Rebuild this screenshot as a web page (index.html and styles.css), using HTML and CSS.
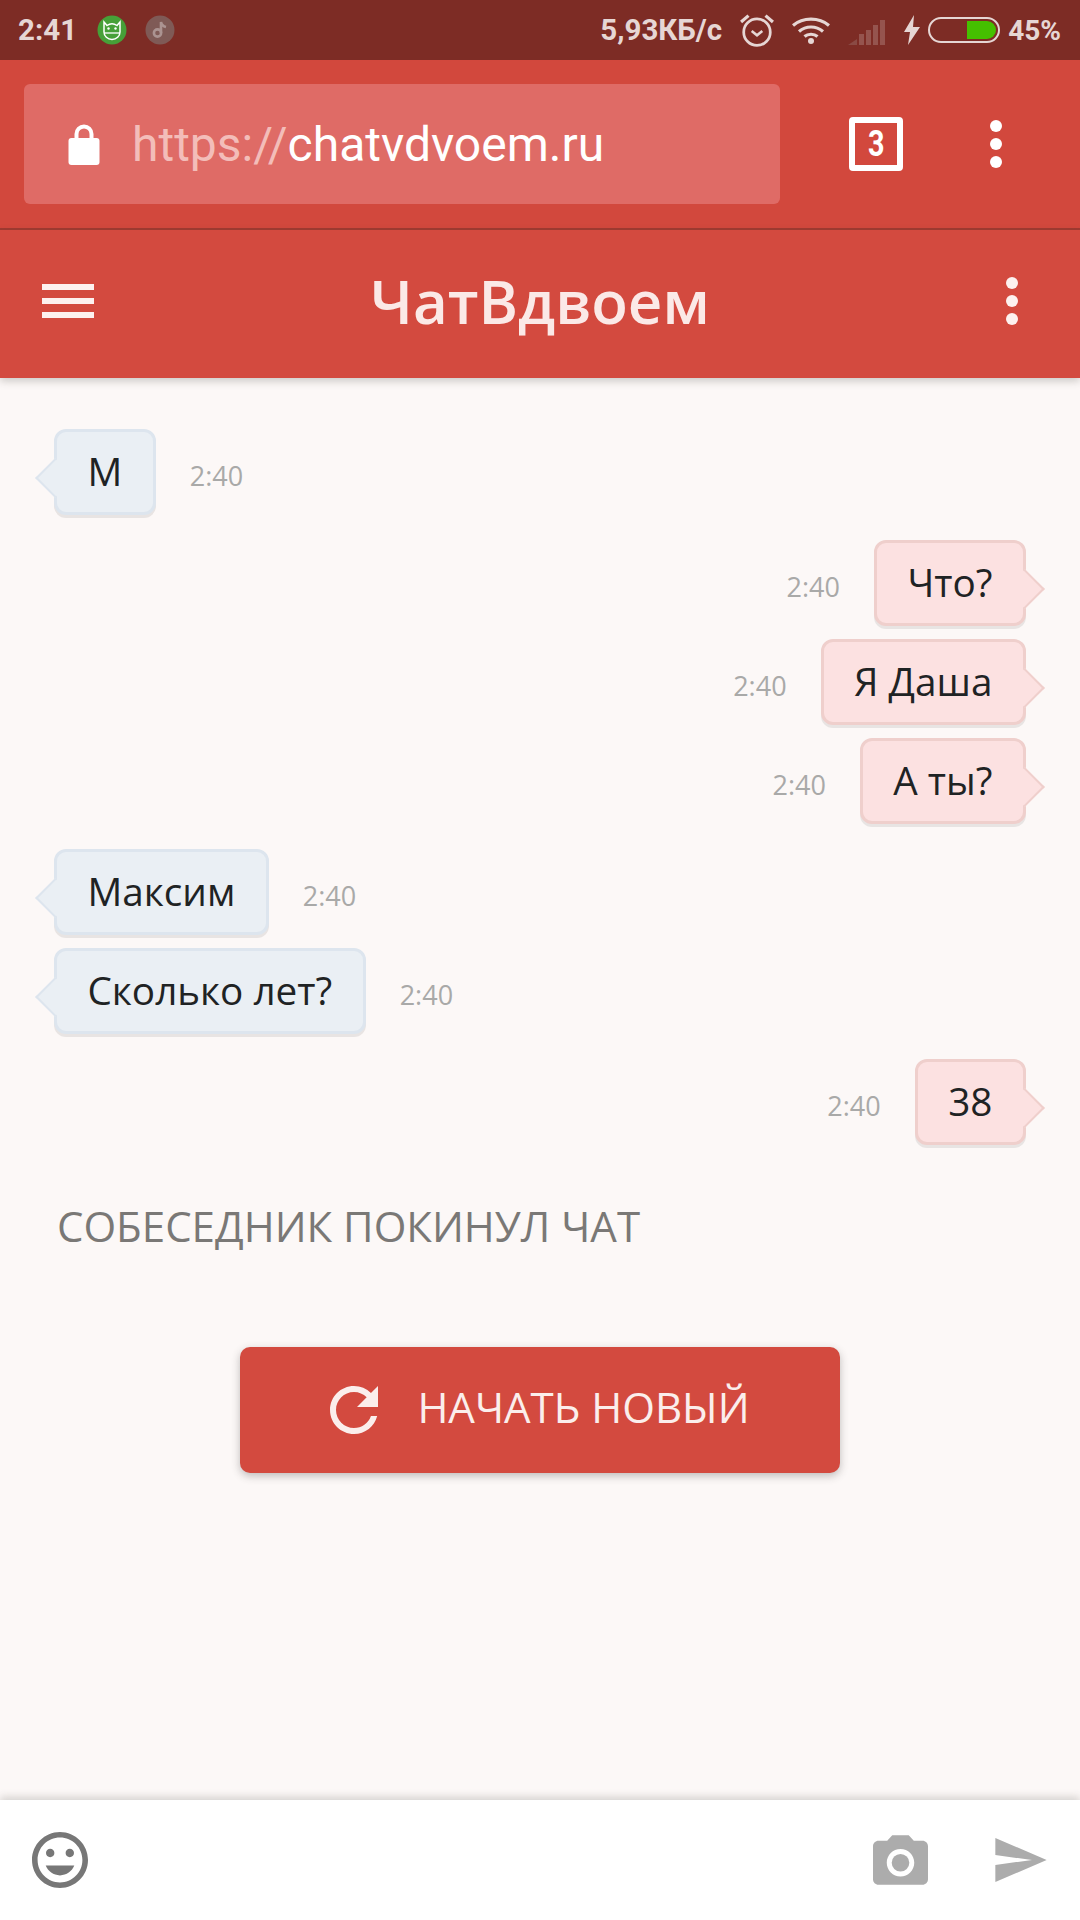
FILE: index.html
```html
<!DOCTYPE html>
<html lang="ru">
<head>
<meta charset="utf-8">
<title>ЧатВдвоем</title>
<link rel="stylesheet" href="styles.css">
</head>
<body>
<div class="page">
  <div class="status">
    <span class="clock">2:41</span>
    <svg class="app-dot dot-android" viewBox="0 0 30 30"><circle cx="15" cy="15" r="14.5" fill="#46a038"/><path d="M7 7l3 3.500A8.500 8.500 0 0 1 20 10.500L23 7v10a8 7.500 0 0 1-16 0z" fill="none" stroke="#fff" stroke-width="1.500"/><path d="M7 18h16" stroke="#fff" stroke-width="1.300"/><circle cx="11.500" cy="13.500" r="1.200" fill="#fff"/><circle cx="18.500" cy="13.500" r="1.200" fill="#fff"/></svg>
    <svg class="app-dot dot-music" viewBox="0 0 30 30"><circle cx="15" cy="15" r="14.500" fill="#7f5a56"/><circle cx="12.500" cy="18" r="3.600" fill="none" stroke="#ab9391" stroke-width="2.600"/><path d="M16 18V7c.6 3 3 4.500 5 5" fill="none" stroke="#ab9391" stroke-width="2.600"/></svg>
    <span class="speed">5,93КБ/с</span>
    <svg class="alarm" viewBox="0 0 32 32"><circle cx="16" cy="18" r="12.500" fill="none" stroke="#e6d6d4" stroke-width="2.600"/><path d="M11 17l5 4 5-4" fill="none" stroke="#e6d6d4" stroke-width="2.400"/><path d="M1 8.500L8 2.500M31 8.500L24 2.500" stroke="#e6d6d4" stroke-width="3"/></svg>
    <svg class="wifi" viewBox="0 0 38 28"><g fill="none" stroke="#e6d6d4" stroke-width="3.200"><path d="M1 9.500C11 1 27 1 37 9.500"/><path d="M7 15.500C14 9.500 24 9.500 31 15.500"/><path d="M12.500 20.500C16 17.500 22 17.500 25.500 20.500"/></g><circle cx="19" cy="25" r="3" fill="#e6d6d4"/></svg>
    <svg class="signal" viewBox="0 0 37 26"><path d="M0 26l9-6v6z" fill="#8a4a44"/><rect x="11" y="15" width="5" height="11" fill="#95544e"/><rect x="18" y="11" width="5" height="15" fill="#95544e"/><rect x="25" y="6" width="5" height="20" fill="#95544e"/><rect x="32" y="1" width="5" height="25" fill="#95544e"/></svg>
    <svg class="bolt" viewBox="0 0 16 30"><path d="M10 0L0 17h6L4 30 16 12H9z" fill="#e6d6d4"/></svg>
    <div class="battery"><div class="battery-fill"></div></div>
    <span class="percent">45%</span>
  </div>

  <div class="browser">
    <div class="urlbar">
      <svg class="lock" viewBox="0 0 31 42"><path d="M8 19v-8a7.500 7.500 0 0 1 15 0v8" fill="none" stroke="#fff" stroke-width="4"/><rect x="0" y="15" width="31" height="27" rx="3" fill="#fff"/></svg>
      <span class="url"><span class="url-scheme">https://</span>chatvdvoem.ru</span>
    </div>
    <div class="tabs"><span>3</span></div>
    <div class="dots dots-browser"><i></i><i></i><i></i></div>
  </div>

  <header class="appbar">
    <div class="burger"><i></i><i></i><i></i></div>
    <h1 class="title">ЧатВдвоем</h1>
    <div class="dots dots-app"><i></i><i></i><i></i></div>
  </header>

  <main class="chat">
    <div class="row in first"><div class="bubble">М</div><span class="time">2:40</span></div>
    <div class="row out group"><span class="time">2:40</span><div class="bubble">Что?</div></div>
    <div class="row out"><span class="time">2:40</span><div class="bubble">Я Даша</div></div>
    <div class="row out"><span class="time">2:40</span><div class="bubble">А ты?</div></div>
    <div class="row in group"><div class="bubble">Максим</div><span class="time">2:40</span></div>
    <div class="row in"><div class="bubble">Сколько лет?</div><span class="time">2:40</span></div>
    <div class="row out group"><span class="time">2:40</span><div class="bubble">38</div></div>
    <p class="notice">СОБЕСЕДНИК ПОКИНУЛ ЧАТ</p>
    <button class="restart" type="button">
      <svg class="restart-icon" viewBox="4 4 16 16"><path d="M17.650 6.350A7.950 7.950 0 0 0 12 4c-4.420 0-7.990 3.580-7.990 8s3.570 8 7.990 8c3.730 0 6.840-2.550 7.730-6h-2.080A5.990 5.990 0 0 1 12 18c-3.310 0-6-2.690-6-6s2.690-6 6-6c1.660 0 3.140.690 4.220 1.780L13 11h7V4l-2.350 2.350z"/></svg>
      <span class="restart-label">НАЧАТЬ НОВЫЙ</span>
    </button>
  </main>

  <footer class="composer">
    <svg class="emoji" viewBox="2 2 20 20"><path d="M11.990 2C6.470 2 2 6.480 2 12s4.470 10 9.990 10C17.520 22 22 17.520 22 12S17.520 2 11.990 2zM12 20c-4.420 0-8-3.580-8-8s3.580-8 8-8 8 3.580 8 8-3.580 8-8 8zm3.500-9c.830 0 1.500-.670 1.500-1.500S16.330 8 15.500 8 14 8.670 14 9.500s.670 1.500 1.500 1.500zm-7 0c.830 0 1.500-.670 1.500-1.500S9.330 8 8.500 8 7 8.670 7 9.500 7.670 11 8.500 11zm3.500 6.500c2.330 0 4.310-1.460 5.110-3.500H6.890c.800 2.040 2.780 3.500 5.110 3.500z"/></svg>
    <svg class="camera" viewBox="2 2 20 18"><circle cx="12" cy="12" r="3.200"/><path d="M9 2L7.170 4H4c-1.100 0-2 .900-2 2v12c0 1.100.900 2 2 2h16c1.100 0 2-.900 2-2V6c0-1.100-.900-2-2-2h-3.170L15 2H9zm3 15c-2.760 0-5-2.240-5-5s2.240-5 5-5 5 2.240 5 5-2.240 5-5 5z"/></svg>
    <svg class="send" viewBox="2 3 21 18"><path d="M2.010 21L23 12 2.010 3 2 10l15 2-15 2z"/></svg>
  </footer>
</div>
</body>
</html>
```

FILE: styles.css
```css
* { box-sizing: border-box; }
html, body { margin: 0; padding: 0; }
body { width: 1080px; height: 1920px; overflow: hidden; background: #fcf8f7; font-family: "Open Sans", "Noto Sans", sans-serif; }
.page { width: 1080px; height: 1920px; display: flex; flex-direction: column; }

/* status bar */
.status { flex: none; height: 60px; background: #7d2c25; display: flex; align-items: center; padding: 0 19px 0 18px; color: #e6d6d4; font-family: Roboto, sans-serif; font-weight: 700; font-size: 29.5px; }
.app-dot { width: 30px; height: 30px; }
.dot-android { margin-left: 20px; }
.dot-music { margin-left: 18px; }
.speed { margin-left: auto; }
.alarm { width: 34px; height: 34px; margin-left: 18px; }
.wifi { width: 38px; height: 28px; margin-left: 18px; }
.signal { width: 37px; height: 26px; margin-left: 18px; margin-top: 4px; }
.bolt { width: 16px; height: 30px; margin-left: 19px; }
.battery { width: 72px; height: 26px; margin-left: 8px; border: 2px solid #e6d6d4; border-radius: 13px; padding: 2px; display: flex; justify-content: flex-end; }
.battery-fill { width: 29px; background: #45c000; border-radius: 0 10px 10px 0; }
.percent { margin-left: 8px; font-size: 28px; }

/* browser toolbar */
.browser { flex: none; height: 170px; background: #d2483d; border-bottom: 2px solid #a13a31; display: flex; align-items: center; padding-left: 24px; }
.urlbar { width: 756px; height: 120px; background: #df6b66; border-radius: 6px; display: flex; align-items: center; padding-left: 44px; }
.lock { width: 32px; height: 42px; }
.url { margin-left: 32px; font-family: Roboto, sans-serif; font-size: 48px; color: #fff; }
.url-scheme { color: #f3bdb9; }
.tabs { width: 54px; height: 54px; margin-left: 69px; border: 6px solid #fff; border-radius: 4px; display: flex; align-items: center; justify-content: center; color: #fff; font-family: Roboto, sans-serif; font-weight: 700; font-size: 36px; }
.tabs span { transform: scaleX(.8); }
.dots { display: flex; flex-direction: column; gap: 6px; }
.dots i { display: block; width: 12px; height: 12px; border-radius: 50%; background: #fff; }
.dots-browser { margin-left: 87px; }

/* app bar */
.appbar { flex: none; height: 148px; background: #d34a3f; display: grid; grid-template-columns: 1fr auto 1fr; align-items: center; padding: 0 62px 6px 42px; box-shadow: 0 3px 8px rgba(60, 60, 50, .25); position: relative; }
.burger { width: 52px; display: flex; flex-direction: column; gap: 8px; }
.burger i { display: block; height: 6px; background: #fdf1ef; }
.title { margin: 0 0 0 20px; font-size: 60px; font-weight: 600; color: #fbe9e7; }
.dots-app { justify-self: end; }
.dots-app i { background: #fdf1ef; }

/* chat */
.chat { flex: 1; display: flex; flex-direction: column; padding: 0 54px; }
.row { display: flex; align-items: center; gap: 34px; margin-top: 13px; }
.row.first { margin-top: 51px; }
.row.group { margin-top: 25px; }
.row.out { justify-content: flex-end; }
.bubble { position: relative; height: 86px; padding: 0 30.5px 3px; display: flex; align-items: center; border: 3px solid; border-radius: 12px; font-size: 38.7px; color: #1f2324; box-shadow: 0 3px 0 rgba(60, 60, 60, .1); }
.bubble::after { content: ""; position: absolute; top: 32px; width: 26px; height: 26px; transform: rotate(45deg); background: inherit; border-style: solid; border-width: 0; border-color: inherit; }
.in .bubble { background: #eaeff4; border-color: #dde5ee; }
.in .bubble::after { left: -16px; border-left-width: 2px; border-bottom-width: 2px; }
.out .bubble { background: #fce1e1; border-color: #efcfcc; }
.out .bubble::after { right: -16px; border-right-width: 2px; border-top-width: 2px; }
.time { font-size: 27px; color: #a9a9a8; margin-top: 6px; }
.notice { margin: 55px 0 0 3px; font-size: 42px; line-height: 52px; color: #7a7876; }
.restart { align-self: center; margin-top: 95px; width: 600px; height: 126px; border: 0; border-radius: 10px; background: #d34a3f; color: #fbeeec; display: flex; align-items: center; justify-content: center; gap: 39px; font-family: inherit; font-size: 42px; box-shadow: 0 3px 8px rgba(50, 50, 50, .3); }
.restart-icon { width: 48px; height: 48px; fill: #fbeeec; }
.restart-label { margin-bottom: 7px; }

/* composer */
.composer { flex: none; height: 120px; background: #fff; display: flex; align-items: center; padding: 0 33px 0 32px; box-shadow: 0 -3px 8px rgba(60, 60, 50, .2); position: relative; }
.emoji { width: 56px; height: 56px; fill: #777; }
.camera { width: 55px; height: 50px; fill: #acacac; margin-left: auto; }
.send { width: 52px; height: 44px; fill: #acacac; margin-left: 67px; }
```
